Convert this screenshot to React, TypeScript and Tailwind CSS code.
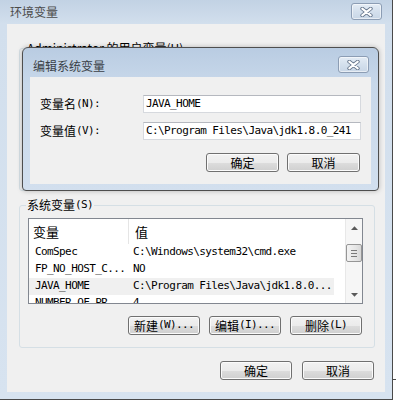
import React from 'react';

// ─── Shared styles ────────────────────────────────────────────────────────────

const CJK = "font-['Noto_Sans_CJK_SC',sans-serif]";
const MONO = "font-['DejaVu_Sans_Mono','Noto_Sans_CJK_SC',monospace] text-[11px] tracking-[-0.6px]";

const BTN =
    'flex items-center justify-center rounded-[3px] border border-[#707070] text-black ' +
    'bg-[linear-gradient(180deg,#f2f2f2_0%,#ebebeb_50%,#dddddd_51%,#cfcfcf_100%)] ' +
    'shadow-[inset_0_0_0_1px_#fbfbfb]';

// ─── Pieces ───────────────────────────────────────────────────────────────────

function CloseButton() {
    return (
        <div className="flex h-[17px] w-[31px] items-center justify-center rounded-[3px] border border-[#8c9db4] bg-[linear-gradient(180deg,#e4ecf5_0%,#d4e0ed_50%,#c8d6e6_100%)] shadow-[inset_0_0_0_1px_rgba(255,255,255,0.55)]">
            <svg width="13" height="10" viewBox="0 0 13 10">
                <path d="M2.2 1.6L10.8 8.4M10.8 1.6L2.2 8.4" stroke="#66768c" strokeWidth="3.8" strokeLinecap="round" />
                <path d="M2.2 1.6L10.8 8.4M10.8 1.6L2.2 8.4" stroke="#ffffff" strokeWidth="2" strokeLinecap="round" />
            </svg>
        </div>
    );
}

function Label({ zh, key_ }: { zh: string; key_: string }) {
    return (
        <span className="flex items-center whitespace-nowrap">
            <span className={`${CJK} text-[12px] leading-[16px]`}>{zh}</span>
            <span className={MONO}>{key_}</span>
        </span>
    );
}

function Arrow({ up }: { up?: boolean }) {
    return (
        <svg width="7" height="4" viewBox="0 0 7 4">
            <path d={up ? 'M0 4L3.5 0.3L7 4Z' : 'M0 0L3.5 3.7L7 0Z'} fill="#5a5a5a" />
        </svg>
    );
}

const rows = [
    { name: 'ComSpec', value: 'C:\\Windows\\system32\\cmd.exe' },
    { name: 'FP_NO_HOST_C...', value: 'NO' },
    { name: 'JAVA_HOME', value: 'C:\\Program Files\\Java\\jdk1.8.0...', selected: true },
    { name: 'NUMBER_OF_PR...', value: '4' },
];

function ListView() {
    return (
        <div className="flex h-[86px] border border-[#828790] bg-white">
            <div className="flex-1 overflow-hidden">
                {/* Header */}
                <div className="flex h-[25px] items-center">
                    <div className={`flex h-full w-[100px] items-center border-r border-[#e5e5e5] pl-[4px] ${CJK} text-[13px]`}>变量</div>
                    <div className={`pl-[6px] ${CJK} text-[13px]`}>值</div>
                </div>
                {rows.map((r) => (
                    <div key={r.name} className={`flex h-[17px] w-[305px] items-center ${r.selected ? 'bg-[#f0f0f0]' : ''}`}>
                        <div className={`w-[100px] pl-[6px] whitespace-nowrap ${MONO}`}>{r.name}</div>
                        <div className={`pl-[4px] whitespace-nowrap ${MONO}`}>{r.value}</div>
                    </div>
                ))}
            </div>
            {/* Scrollbar */}
            <div className="flex w-[17px] flex-col border-l border-[#e8e8e8] bg-[#f6f6f6]">
                <div className="flex h-[17px] items-center justify-center">
                    <Arrow up />
                </div>
                <div className="mt-[8px] flex h-[18px] flex-col items-center justify-center gap-[2px] rounded-[2px] border border-[#969696] bg-[linear-gradient(90deg,#f3f3f3_0%,#e6e6e6_60%,#d8d8d8_100%)]">
                    <div className="h-px w-[6px] bg-[#7a7a7a]" />
                    <div className="h-px w-[6px] bg-[#7a7a7a]" />
                    <div className="h-px w-[6px] bg-[#7a7a7a]" />
                </div>
                <div className="flex-1" />
                <div className="flex h-[17px] items-center justify-center">
                    <Arrow />
                </div>
            </div>
        </div>
    );
}

function EditDialog() {
    return (
        <div className="absolute left-[22px] top-[47px] flex h-[144px] w-[357px] flex-col rounded-t-[6px] rounded-b-[4px] border border-[#4e4e4e] bg-[linear-gradient(180deg,#b9cce2_0%,#c8d8ea_25%,#d2dfee_100%)] shadow-[0_0_5px_rgba(0,0,0,0.25)]">
            <div className="flex h-[29px] items-start justify-between pl-[10px] pr-[9px]">
                <span className={`mt-[10px] ${CJK} text-[12px] leading-[16px] text-[#3a3f46]`}>编辑系统变量</span>
                <div className="mt-[8px]">
                    <CloseButton />
                </div>
            </div>
            <div className="mx-[7px] mb-[6px] flex flex-1 flex-col bg-[#f0f0f0] pl-[10px] pr-[10px] pt-[18px]">
                <div className="flex h-[18px] items-center">
                    <div className="w-[103px]">
                        <Label zh="变量名" key_="(N):" />
                    </div>
                    <div className={`flex h-[18px] flex-1 items-center border border-[#d6d9de] border-t-[#b5b8bf] bg-white pl-[2px] pt-[1px] ${MONO}`}>
                        JAVA_HOME
                    </div>
                </div>
                <div className="mt-[9px] flex h-[18px] items-center">
                    <div className="w-[103px]">
                        <Label zh="变量值" key_="(V):" />
                    </div>
                    <div className={`flex h-[18px] flex-1 items-center border border-[#d6d9de] border-t-[#b5b8bf] bg-white pl-[2px] pt-[1px] whitespace-nowrap ${MONO}`}>
                        C:\Program Files\Java\jdk1.8.0_241
                    </div>
                </div>
                <div className="mt-[13px] flex justify-end gap-[8px] pr-[1px]">
                    <button className={`${BTN} h-[19px] w-[73px] ${CJK} text-[12px]`}>确定</button>
                    <button className={`${BTN} h-[19px] w-[73px] ${CJK} text-[12px]`}>取消</button>
                </div>
            </div>
        </div>
    );
}

// ─── Component ────────────────────────────────────────────────────────────────

export default function App() {
    return (
        <div className="flex h-[404px] w-[396px] bg-white">
            <div className="relative flex h-[400px] w-[393px] shrink-0 flex-col border-r border-b border-[#4a4a4a] bg-[linear-gradient(180deg,#c2d2e4_0px,#d2dfed_24px,#d7e3f0_100%)]">
                {/* Title bar */}
                <div className="flex h-[24px] items-start justify-between pl-[10px] pr-[10px]">
                    <span className={`mt-[4px] ${CJK} text-[12px] leading-[16px] text-[#4b4b4b]`}>环境变量</span>
                    <div className="mt-[3px]">
                        <CloseButton />
                    </div>
                </div>

                {/* Client area */}
                <div className="ml-[7px] flex h-[368px] w-[378px] flex-col bg-[#f0f0f0] pl-[12px] pr-[10px]">
                    <fieldset className="mt-[17px] h-[150px] rounded-[3px] border border-[#d5dfe5] pl-[8px]">
                        <legend className={`-ml-[2px] px-[1px] ${CJK} text-[12px] leading-[14px]`}>
                            Administrator 的用户变量(U)
                        </legend>
                    </fieldset>

                    <fieldset className="mt-[7px] h-[150px] rounded-[3px] border border-[#d5dfe5] pl-[8px] pr-[11px] pt-[6px]">
                        <legend className={`-ml-[2px] flex items-center px-[1px] leading-[14px]`}>
                            <span className={`${CJK} text-[12px] leading-[14px]`}>系统变量</span>
                            <span className={MONO}>(S)</span>
                        </legend>
                        <ListView />
                        <div className="mt-[12px] flex justify-end gap-[9px] pr-[1px]">
                            <button className={`${BTN} h-[19px] w-[72px]`}>
                                <Label zh="新建" key_="(W)..." />
                            </button>
                            <button className={`${BTN} h-[19px] w-[72px]`}>
                                <Label zh="编辑" key_="(I)..." />
                            </button>
                            <button className={`${BTN} h-[19px] w-[72px]`}>
                                <Label zh="删除" key_="(L)" />
                            </button>
                        </div>
                    </fieldset>

                    <div className="mt-[13px] mr-[1px] flex justify-end gap-[10px]">
                        <button className={`${BTN} h-[19px] w-[72px] ${CJK} text-[12px]`}>确定</button>
                        <button className={`${BTN} h-[19px] w-[72px] ${CJK} text-[12px]`}>取消</button>
                    </div>
                </div>

                <EditDialog />
            </div>
            <div className="flex-1">
                <div className="mt-[379px] border-t border-[#4a4a4a]" />
            </div>
        </div>
    );
}
